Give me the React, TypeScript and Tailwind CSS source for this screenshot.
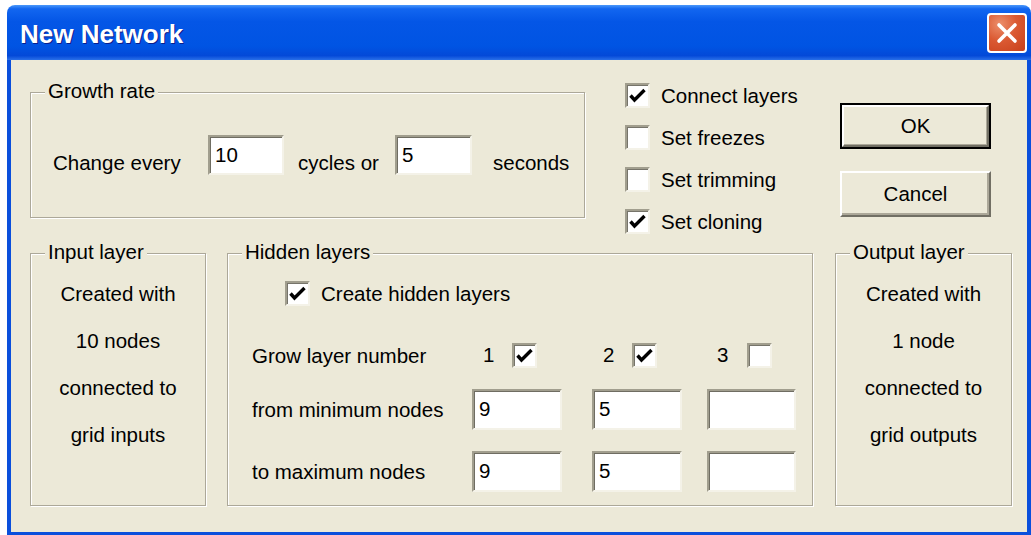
import React from 'react';

// Classic sunken edit box
const Edit: React.FC<{ value?: string; w: number; h: number }> = ({ value = '', w, h }) => (
  <div
    className="bg-white border-2 border-t-[#A19E8E] border-l-[#A19E8E] border-r-[#F4F2E8] border-b-[#F4F2E8] shadow-[inset_1px_1px_0_#6F6D62] pl-[5px] pt-[6px] leading-[24px] text-black"
    style={{ width: w, height: h }}
  >
    {value}
  </div>
);

const CheckBox: React.FC<{ checked?: boolean }> = ({ checked }) => (
  <div className="w-[25px] h-[25px] shrink-0 bg-white border-2 border-t-[#A19E8E] border-l-[#A19E8E] border-r-[#F4F2E8] border-b-[#F4F2E8] shadow-[inset_1px_1px_0_#76746A]">
    {checked && (
      <svg width="21" height="21" viewBox="0 0 21 21">
        <polyline points="3.5,10.5 7.5,15 17.5,5" fill="none" stroke="#000" strokeWidth="3.4" />
      </svg>
    )}
  </div>
);

const CheckRow: React.FC<{ checked?: boolean; label: string }> = ({ checked, label }) => (
  <div className="flex items-center h-[25px]">
    <CheckBox checked={checked} />
    <span className="ml-[11px] leading-[24px] whitespace-nowrap">{label}</span>
  </div>
);

const GroupBox: React.FC<{ title: string; className?: string; children?: React.ReactNode }> = ({
  title,
  className = '',
  children,
}) => (
  <div
    className={`relative border border-[#ACA899] shadow-[inset_1px_1px_0_#fff,1px_1px_0_#fff] ${className}`}
  >
    <span className="absolute left-[14px] top-[-14px] px-[3px] bg-[#ECE9D8] leading-[24px] whitespace-nowrap">
      {title}
    </span>
    {children}
  </div>
);

const LayerInfo: React.FC<{ lines: string[] }> = ({ lines }) => (
  <div className="flex flex-col items-center pt-[16px] leading-[47px] whitespace-nowrap">
    {lines.map((l) => (
      <span key={l}>{l}</span>
    ))}
  </div>
);

export default function App() {
  return (
    <div className="w-[1031px] h-[535px] bg-white overflow-hidden pl-[7px] pt-[5px] font-['Liberation_Sans',Arial,sans-serif] text-[20.5px] text-black">
      <div className="w-[1024px] h-[530px] flex flex-col">
        {/* Title bar */}
        <div className="h-[55px] shrink-0 rounded-t-[8px] flex items-center justify-between pl-[13px] pr-[4px] bg-[linear-gradient(to_bottom,#4A98FA_0%,#1266F0_7%,#0456E6_30%,#0054E3_75%,#0349D8_92%,#2A6FE8_100%)]">
          <span className="text-white font-bold text-[26px] leading-[30px] mt-[2px] [text-shadow:1px_1px_0_#0A1E8C]">
            New Network
          </span>
          <div className="w-[40px] h-[40px] mb-[-1px] rounded-[4px] border-2 border-white flex items-center justify-center bg-[radial-gradient(circle_at_30%_25%,#EC8F6C_0%,#DB5A33_45%,#C8401B_100%)]">
            <svg width="22" height="22" viewBox="0 0 22 22">
              <path d="M3 3 L19 19 M19 3 L3 19" stroke="#fff" strokeWidth="3.6" strokeLinecap="round" />
            </svg>
          </div>
        </div>

        {/* Dialog body */}
        <div className="flex-1 bg-[#ECE9D8] border-l-4 border-r-4 border-b-[3px] border-[#0A4FDC]">
          <div className="flex items-start pl-[19px] h-[175px]">
            <GroupBox title="Growth rate" className="mt-[32px] w-[555px] h-[126px]">
              <div className="flex items-start pl-[22px] pt-[42px]">
                <span className="w-[155px] mt-[16px] leading-[24px] whitespace-nowrap">Change every</span>
                <Edit value="10" w={76} h={40} />
                <span className="ml-[14px] w-[97px] mt-[16px] leading-[24px] whitespace-nowrap">cycles or</span>
                <Edit value="5" w={77} h={40} />
                <span className="ml-[21px] mt-[16px] leading-[24px] whitespace-nowrap">seconds</span>
              </div>
            </GroupBox>

            <div className="ml-[40px] mt-[23px] w-[215px] flex flex-col gap-[17px]">
              <CheckRow checked label="Connect layers" />
              <CheckRow label="Set freezes" />
              <CheckRow label="Set trimming" />
              <CheckRow checked label="Set cloning" />
            </div>

            <div className="mt-[43px] flex flex-col gap-[22px]">
              <button className="w-[151px] h-[46px] border-2 border-black bg-[#ECE9D8]">
                <div className="w-full h-full flex items-center justify-center border-2 border-t-white border-l-white border-r-[#716F64] border-b-[#716F64] shadow-[inset_-1px_-1px_0_#ACA899]">
                  OK
                </div>
              </button>
              <button className="w-[151px] h-[46px] flex items-center justify-center border-2 border-t-white border-l-white border-r-[#716F64] border-b-[#716F64] shadow-[inset_-2px_-2px_0_#ACA899] bg-[#ECE9D8]">
                Cancel
              </button>
            </div>
          </div>

          <div className="flex pl-[19px] mt-[18px]">
            <GroupBox title="Input layer" className="w-[176px] h-[253px]">
              <LayerInfo lines={['Created with', '10 nodes', 'connected to', 'grid inputs']} />
            </GroupBox>

            <GroupBox title="Hidden layers" className="ml-[21px] w-[586px] h-[253px]">
              <div className="pl-[24px] pt-[27px]">
                <div className="ml-[33px]">
                  <CheckRow checked label="Create hidden layers" />
                </div>

                <div className="flex items-center h-[25px] mt-[37px]">
                  <span className="w-[220px] leading-[24px] whitespace-nowrap">Grow layer number</span>
                  <div className="w-[120px] flex items-center pl-[11px]">
                    <span className="w-[29px]">1</span>
                    <CheckBox checked />
                  </div>
                  <div className="w-[115px] flex items-center pl-[11px]">
                    <span className="w-[29px]">2</span>
                    <CheckBox checked />
                  </div>
                  <div className="w-[89px] flex items-center pl-[10px]">
                    <span className="w-[30px]">3</span>
                    <CheckBox />
                  </div>
                </div>

                <div className="flex items-center mt-[21px]">
                  <span className="w-[220px] leading-[24px] whitespace-nowrap">from minimum nodes</span>
                  <div className="w-[120px]"><Edit value="9" w={90} h={41} /></div>
                  <div className="w-[115px]"><Edit value="5" w={90} h={41} /></div>
                  <Edit w={89} h={41} />
                </div>

                <div className="flex items-center mt-[21px]">
                  <span className="w-[220px] leading-[24px] whitespace-nowrap">to maximum nodes</span>
                  <div className="w-[120px]"><Edit value="9" w={90} h={41} /></div>
                  <div className="w-[115px]"><Edit value="5" w={90} h={41} /></div>
                  <Edit w={89} h={41} />
                </div>
              </div>
            </GroupBox>

            <GroupBox title="Output layer" className="ml-[22px] w-[177px] h-[253px]">
              <LayerInfo lines={['Created with', '1 node', 'connected to', 'grid outputs']} />
            </GroupBox>
          </div>
        </div>
      </div>
    </div>
  );
}
